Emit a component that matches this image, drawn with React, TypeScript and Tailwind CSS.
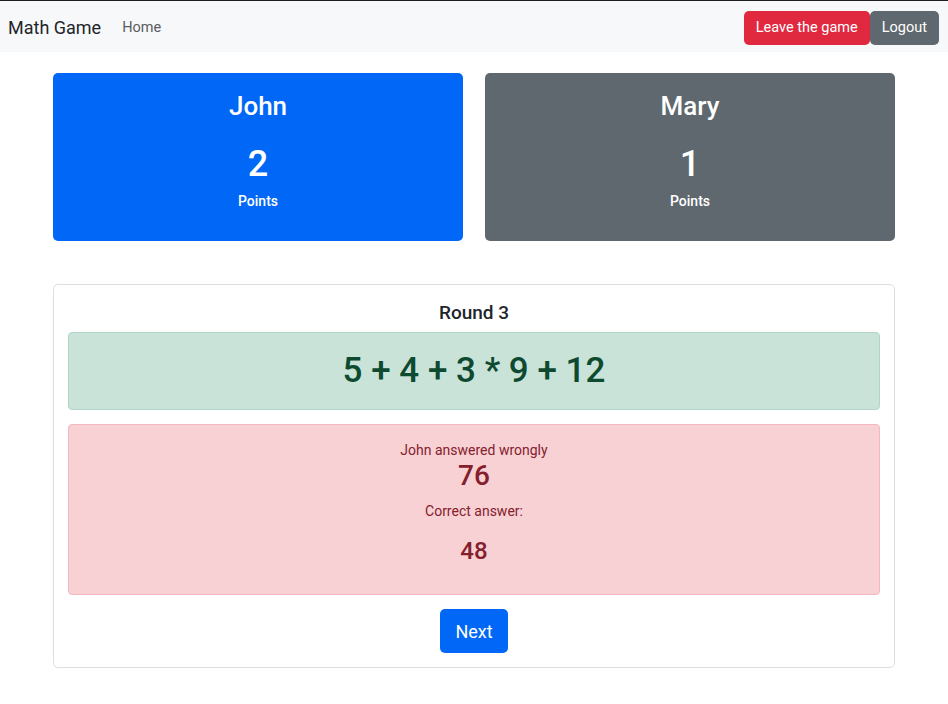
import React from "react";

const FONT = { fontFamily: "Roboto, Inter, 'Liberation Sans', sans-serif" };

function PlayerCard({ name, points, active }: { name: string; points: number; active: boolean }) {
  return (
    <div
      className={`flex h-[168px] flex-col items-center rounded-[5px] text-white ${
        active ? "bg-[#0167f6]" : "bg-[#5f686e]"
      }`}
    >
      <h2 className="mt-[16px] text-[26px] font-medium leading-[34px]">{name}</h2>
      <div className="mt-[21px] text-[36px] font-medium leading-[40px]">{points}</div>
      <div className="mt-[7px] text-[14px] font-medium leading-[20px]">Points</div>
    </div>
  );
}

export default function App() {
  return (
    <div style={FONT} className="min-h-[704px] border-t border-[#1e1e1e] bg-white text-[#212529]">
      <nav className="flex h-[51px] items-center bg-[#f7f8fa] pl-2 pr-[9px] pt-[2px]">
        <span className="text-[18px] leading-[26px]">Math Game</span>
        <a className="ml-[21px] text-[14.5px] text-[#5a5c5e]">Home</a>
        <div className="ml-auto flex">
          <button className="h-[34px] rounded-[5px] bg-[#e0283f] px-3 text-[14.5px] text-white">
            Leave the game
          </button>
          <button className="h-[34px] rounded-[5px] bg-[#5f686e] px-3 text-[14.5px] text-white">
            Logout
          </button>
        </div>
      </nav>

      <main className="mx-auto w-[842px] pt-[21px]">
        <div className="grid grid-cols-2 gap-[22px]">
          <PlayerCard name="John" points={2} active />
          <PlayerCard name="Mary" points={1} active={false} />
        </div>

        <section className="mt-[43px] flex flex-col rounded-[5px] border border-[#dcdfe2] px-[14px] pb-[14px]">
          <h3 className="mt-[14px] text-center text-[19px] font-medium leading-[28px]">Round 3</h3>
          <div className="mt-[5px] flex h-[78px] items-center justify-center rounded-[4px] border border-[#b0d7c5] bg-[#c9e3d9] text-[35px] font-medium text-[#0e4a2f]">
            5 + 4 + 3 * 9 + 12
          </div>
          <div className="mt-[14px] flex h-[171px] flex-col items-center rounded-[4px] border border-[#f4b7bd] bg-[#f8d1d5] text-[#84202b]">
            <p className="mt-[15px] text-[14px] leading-[20px]">John answered wrongly</p>
            <p className="text-[28px] font-medium leading-[32px]">76</p>
            <p className="mt-[9px] text-[14px] leading-[20px]">Correct answer:</p>
            <p className="mt-[16px] text-[24px] font-medium leading-[28px]">48</p>
          </div>
          <button className="mx-auto mt-[14px] h-[44px] w-[68px] rounded-[5px] bg-[#0167f6] text-[18px] text-white">
            Next
          </button>
        </section>
      </main>
    </div>
  );
}
